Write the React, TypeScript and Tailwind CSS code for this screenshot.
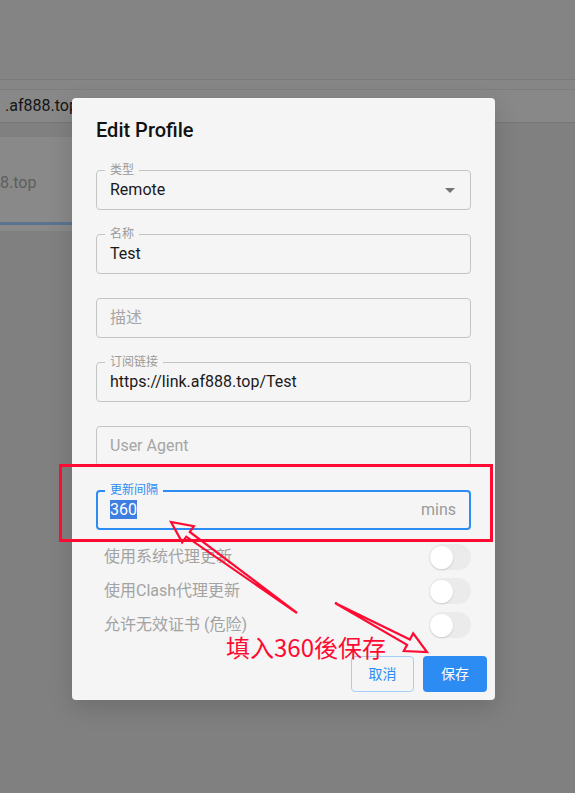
import React from "react";

const FONT = { fontFamily: 'Roboto, "Noto Sans CJK SC", sans-serif' };

type Pt = [number, number];
function arrowPoints(T: Pt, P: Pt, headLen = 20, headHalf = 10, shaftHalf = 3): string {
  const dx = P[0] - T[0];
  const dy = P[1] - T[1];
  const len = Math.hypot(dx, dy);
  const ux = dx / len;
  const uy = dy / len;
  const nx = -uy;
  const ny = ux;
  const bx = P[0] - ux * headLen;
  const by = P[1] - uy * headLen;
  const pts: Pt[] = [
    T,
    [bx + nx * shaftHalf, by + ny * shaftHalf],
    [bx + nx * headHalf, by + ny * headHalf],
    P,
    [bx - nx * headHalf, by - ny * headHalf],
    [bx - nx * shaftHalf, by - ny * shaftHalf],
  ];
  return pts.map((p) => `${p[0].toFixed(1)},${p[1].toFixed(1)}`).join(" ");
}

function Field({
  label,
  value,
  placeholder,
  select,
}: {
  label?: string;
  value?: string;
  placeholder?: string;
  select?: boolean;
}) {
  return (
    <div className="relative h-[40px] rounded-[4px] border border-[#c4c4c4] flex items-center pl-[13px] pr-[12px]">
      {label && (
        <span className="absolute left-[8px] top-[-9px] px-[5px] bg-[#f5f5f5] text-[12px] leading-[16px] text-[#9a9a9a]">
          {label}
        </span>
      )}
      {value ? (
        <span className="text-[16px] text-[#1a1a1a] flex-1">{value}</span>
      ) : (
        <span className="text-[16px] text-[#a5a5a5] flex-1">{placeholder}</span>
      )}
      {select && (
        <svg width="24" height="24" viewBox="0 0 24 24" className="mr-[-4px]">
          <path d="M7 10l5 5 5-5z" fill="#757575" />
        </svg>
      )}
    </div>
  );
}

function Toggle() {
  return (
    <div className="relative w-[42px] h-[26px] rounded-full bg-[#ebebeb]">
      <div className="absolute left-[1px] top-[1.5px] w-[23px] h-[23px] rounded-full bg-white shadow-[0_1px_2px_rgba(0,0,0,0.15)]" />
    </div>
  );
}

export default function App() {
  const rows = ["使用系统代理更新", "使用Clash代理更新", "允许无效证书 (危险)"];
  return (
    <div className="relative w-[575px] h-[793px] overflow-hidden bg-[#808080]" style={FONT}>
      {/* background page (dimmed) */}
      <div className="h-[80px] bg-[#848484] border-b border-[#7a7a7a]" />
      <div className="h-[10px] bg-[#868686] border-b border-[#7d7d7d]" />
      <div className="h-[33px] bg-[#888888] border-b border-[#767676] flex items-center">
        <span className="pl-[5px] text-[16px] text-[#151515] whitespace-nowrap">.af888.top</span>
      </div>
      <div className="h-[14px]" />
      <div className="w-[72px] h-[94px] bg-[#898989] flex flex-col">
        <div className="flex-1 flex items-center pt-[10px]">
          <span className="text-[16px] text-[#5e5e5e] whitespace-nowrap">8.top</span>
        </div>
        <div className="h-[3px] bg-[#5b7390] mt-[4px] mb-[6px]" />
      </div>

      {/* dialog */}
      <div className="absolute left-[72px] top-[98px] w-[423px] rounded-[4px] bg-[#f5f5f5] shadow-[0_8px_24px_rgba(0,0,0,0.15)]">
        <div className="px-[24px] py-[16px] text-[20px] leading-[32px] font-medium text-[#111]">Edit Profile</div>
        <div className="px-[24px] pt-[8px] flex flex-col gap-[24px]">
          <Field label="类型" value="Remote" select />
          <Field label="名称" value="Test" />
          <Field placeholder="描述" />
          <Field label="订阅链接" value="https://link.af888.top/Test" />
          <Field placeholder="User Agent" />
          <div className="relative h-[40px] rounded-[4px] border-2 border-[#2c8cf4] flex items-center pl-[12px] pr-[13px]">
            <span className="absolute left-[7px] top-[-10px] px-[5px] bg-[#f5f5f5] text-[12px] leading-[16px] text-[#2c8cf4]">
              更新间隔
            </span>
            <span className="flex-1 text-[16px]">
              <span className="bg-[#3d7ee0] text-white">360</span>
            </span>
            <span className="text-[16px] text-[#9a9a9a]">mins</span>
          </div>
        </div>
        <div className="pl-[32px] pr-[24px] pt-[10px]">
          {rows.map((r) => (
            <div key={r} className="h-[34px] flex items-center justify-between">
              <span className="text-[16px] text-[#a3a3a3]">{r}</span>
              <Toggle />
            </div>
          ))}
        </div>
        <div className="flex justify-end gap-[9px] p-[8px] pt-[14px]">
          <button className="w-[63px] h-[36px] rounded-[4px] border border-[#a6cdf8] text-[14px] text-[#2c8cf4]">
            取消
          </button>
          <button className="w-[64px] h-[36px] rounded-[4px] bg-[#2c8cf4] text-[14px] text-white">保存</button>
        </div>
      </div>

      {/* annotations */}
      <div className="absolute left-[59px] top-[464px] w-[434px] h-[78px] border-[3px] border-[#ff0a33]" />
      <div
        className="absolute left-[226px] top-[632px] text-[24px] leading-[30px] text-[#ff0a33] whitespace-nowrap"
        style={{ fontFamily: '"Noto Sans CJK SC", sans-serif' }}
      >
        填入360後保存
      </div>
      <svg className="absolute left-0 top-0" width="575" height="793" viewBox="0 0 575 793">
        <polygon
          points={arrowPoints([297, 613], [171, 522], 21, 10, 3)}
          fill="none"
          stroke="#ff0a33"
          strokeWidth="2.2"
          strokeLinejoin="miter"
        />
        <polygon
          points={arrowPoints([335, 603], [427, 652], 21, 10, 3)}
          fill="none"
          stroke="#ff0a33"
          strokeWidth="2.2"
          strokeLinejoin="miter"
        />
      </svg>
    </div>
  );
}
